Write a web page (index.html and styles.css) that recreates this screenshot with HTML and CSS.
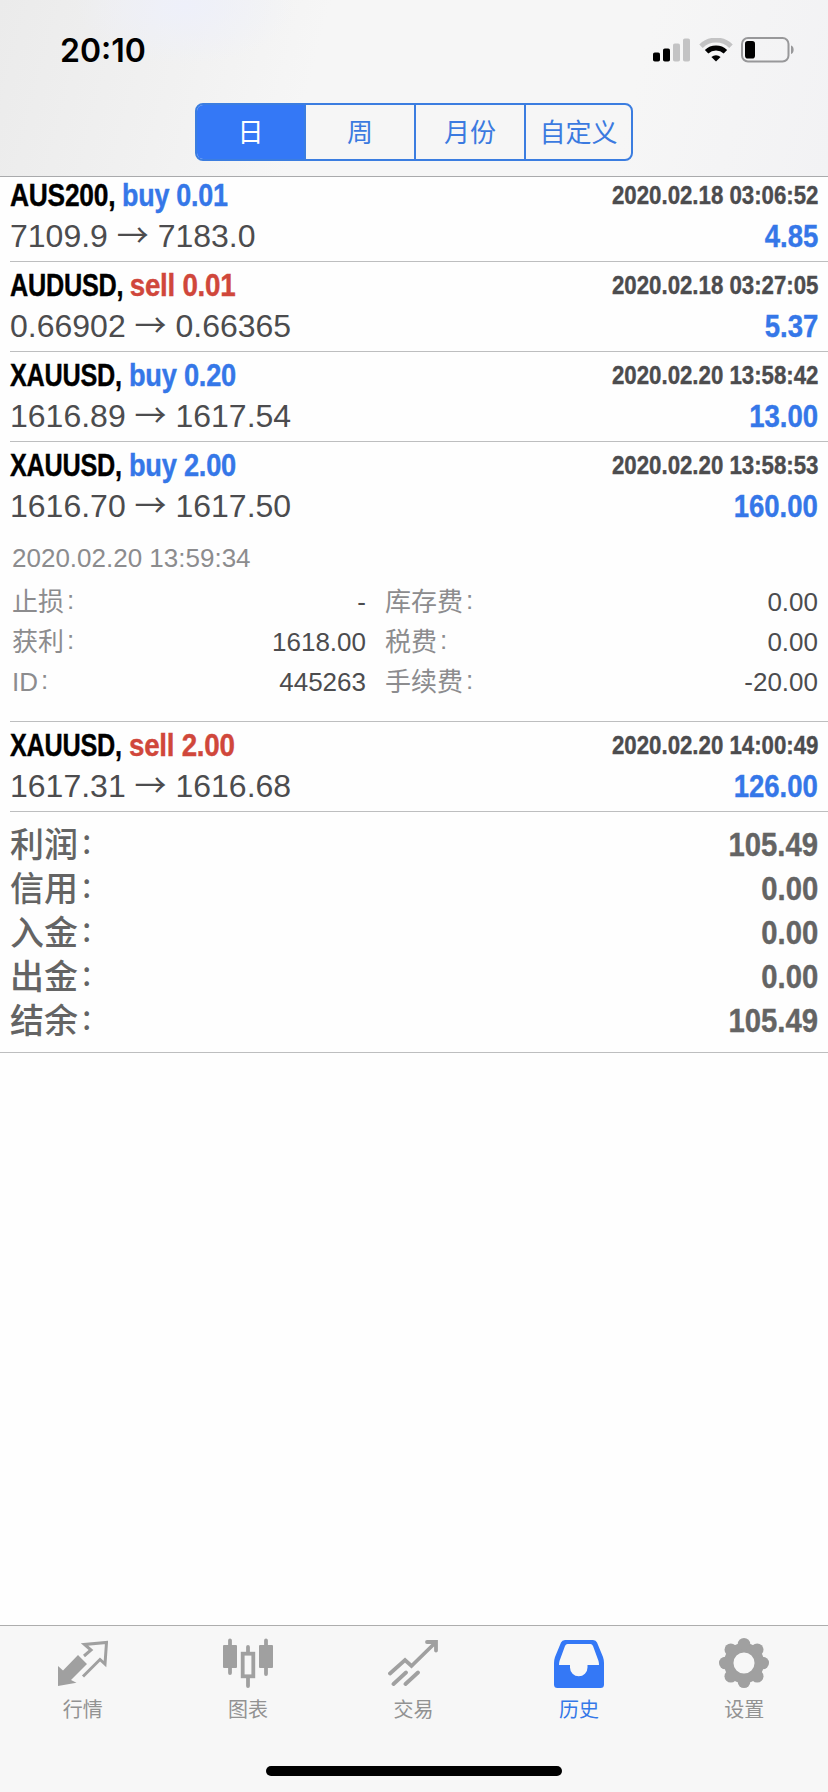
FILE: index.html
```
<!DOCTYPE html>
<html lang="zh-CN">
<head>
    <meta charset="UTF-8">
    <meta name="viewport" content="width=device-width, initial-scale=1.0">
    <title>历史</title>
    <link rel="stylesheet" href="styles.css">
</head>
<body>
    <div class="app">
        <header class="header">
            <div class="status-bar">
                <span class="clock">20:10</span>
                <div class="status-icons">
                    <svg class="signal" width="37" height="24" viewBox="0 0 37 24">
                        <rect x="0" y="14.5" width="7" height="9" rx="1.8"/>
                        <rect x="10" y="10.5" width="7" height="13" rx="1.8"/>
                        <rect class="dim" x="20" y="5.5" width="7" height="18" rx="1.8"/>
                        <rect class="dim" x="30" y="0.5" width="7" height="23" rx="1.8"/>
                    </svg>
                    <svg class="wifi" width="34" height="24" viewBox="0 0 34 24">
                        <path class="wifi-dim" d="M2 8.2 A21.5 21.5 0 0 1 32 8.2"/>
                        <path class="wifi-on" d="M7.6 13.7 A13.6 13.6 0 0 1 26.4 13.7"/>
                        <path d="M17 23.5 L12.4 19 A7 7 0 0 1 21.6 19 Z"/>
                    </svg>
                    <svg class="battery" width="54" height="26" viewBox="0 0 54 26">
                        <rect class="battery-frame" x="1" y="1" width="46.5" height="23.5" rx="6"/>
                        <rect x="4" y="4" width="10" height="17.5" rx="2.8"/>
                        <path class="battery-nub" d="M50 8.5 C53.5 9.5 53.5 16 50 17 Z"/>
                    </svg>
                </div>
            </div>
            <div class="segments">
                <div class="segment active">日</div>
                <div class="segment">周</div>
                <div class="segment">月份</div>
                <div class="segment">自定义</div>
            </div>
        </header>

        <main class="history">
            <div class="deal first">
                <div class="line"><span class="symbol wide">AUS200, <span class="buy">buy 0.01</span></span><span class="time">2020.02.18 03:06:52</span></div>
                <div class="line"><span class="price">7109.9 <span class="arrow">→</span> 7183.0</span><span class="profit">4.85</span></div>
            </div>
            <div class="deal">
                <div class="line"><span class="symbol">AUDUSD, <span class="sell">sell 0.01</span></span><span class="time">2020.02.18 03:27:05</span></div>
                <div class="line"><span class="price">0.66902 <span class="arrow">→</span> 0.66365</span><span class="profit">5.37</span></div>
            </div>
            <div class="deal">
                <div class="line"><span class="symbol">XAUUSD, <span class="buy">buy 0.20</span></span><span class="time">2020.02.20 13:58:42</span></div>
                <div class="line"><span class="price">1616.89 <span class="arrow">→</span> 1617.54</span><span class="profit">13.00</span></div>
            </div>
            <div class="deal">
                <div class="line"><span class="symbol">XAUUSD, <span class="buy">buy 2.00</span></span><span class="time">2020.02.20 13:58:53</span></div>
                <div class="line"><span class="price">1616.70 <span class="arrow">→</span> 1617.50</span><span class="profit">160.00</span></div>
                <div class="details">
                    <div class="close-time">2020.02.20 13:59:34</div>
                    <div class="detail"><span>止损<i>:</i></span><b>-</b></div>
                    <div class="detail"><span>库存费<i>:</i></span><b>0.00</b></div>
                    <div class="detail"><span>获利<i>:</i></span><b>1618.00</b></div>
                    <div class="detail"><span>税费<i>:</i></span><b>0.00</b></div>
                    <div class="detail"><span>ID<i>:</i></span><b>445263</b></div>
                    <div class="detail"><span>手续费<i>:</i></span><b>-20.00</b></div>
                </div>
            </div>
            <div class="deal">
                <div class="line"><span class="symbol">XAUUSD, <span class="sell">sell 2.00</span></span><span class="time">2020.02.20 14:00:49</span></div>
                <div class="line"><span class="price">1617.31 <span class="arrow">→</span> 1616.68</span><span class="profit">126.00</span></div>
            </div>
            <div class="totals">
                <div class="total"><span class="total-label">利润<i>:</i></span><span class="total-value">105.49</span></div>
                <div class="total"><span class="total-label">信用<i>:</i></span><span class="total-value">0.00</span></div>
                <div class="total"><span class="total-label">入金<i>:</i></span><span class="total-value">0.00</span></div>
                <div class="total"><span class="total-label">出金<i>:</i></span><span class="total-value">0.00</span></div>
                <div class="total"><span class="total-label">结余<i>:</i></span><span class="total-value">105.49</span></div>
            </div>
        </main>

        <footer class="footer">
            <nav class="tabs">
                <div class="tab">
                    <svg width="50" height="50" viewBox="0 0 50 50">
                        <path d="M0 28 L5 32.5 L20 17 L29 26 L13 42 L18.5 44.7 L0 48 Z"/>
                        <path class="thin" d="M26 18 L33 12 L26.5 6.5 L48.5 4.5 L47 26 L42 21.5 L25 38.5"/>
                    </svg>
                    <span>行情</span>
                </div>
                <div class="tab">
                    <svg width="50" height="50" viewBox="0 0 50 50">
                        <rect x="0" y="7" width="14" height="23" rx="1"/>
                        <rect x="36" y="7" width="14" height="23" rx="1"/>
                        <path class="stroke" d="M7 2.5 V35 M43 2.5 V36 M25 9 V15 M25 40 V48"/>
                        <rect class="stroke" x="19.7" y="15.7" width="10.6" height="22.6"/>
                    </svg>
                    <span>图表</span>
                </div>
                <div class="tab">
                    <svg width="50" height="50" viewBox="0 0 50 50">
                        <path class="stroke" d="M2 35.5 L17 22 L23.5 28 L47.5 4.5 M39 4 H48 V12.5 M5.5 46 L18 34.5 M17.5 46 L30 34.5"/>
                    </svg>
                    <span>交易</span>
                </div>
                <div class="tab active">
                    <svg width="50" height="50" viewBox="0 0 50 50">
                        <path fill-rule="evenodd" d="M11 2 H39 Q42 2 43 4.5 L49 19 Q50 22 50 25 V46.5 Q50 50 46.5 50 H3.5 Q0 50 0 46.5 V25 Q0 22 1 19 L7 4.5 Q8 2 11 2 Z M13.5 6 Q11.8 6 11 8 L5.5 23 Q5 25 5 27 H16 V29.5 A8.7 8.7 0 0 0 33.5 29.5 V27 H45 Q45 25 44.5 23 L39 8 Q38.2 6 36.5 6 Z"/>
                    </svg>
                    <span>历史</span>
                </div>
                <div class="tab">
                    <svg width="50" height="50" viewBox="0 0 50 50">
                        <circle class="gear-ring" cx="25" cy="25" r="15.3"/>
                        <circle cx="25" cy="6.3" r="6.3"/>
                        <circle cx="38.2" cy="11.8" r="6.3"/>
                        <circle cx="43.7" cy="25" r="6.3"/>
                        <circle cx="38.2" cy="38.2" r="6.3"/>
                        <circle cx="25" cy="43.7" r="6.3"/>
                        <circle cx="11.8" cy="38.2" r="6.3"/>
                        <circle cx="6.3" cy="25" r="6.3"/>
                        <circle cx="11.8" cy="11.8" r="6.3"/>
                    </svg>
                    <span>设置</span>
                </div>
            </nav>
            <div class="home-indicator"></div>
        </footer>
    </div>
</body>
</html>
```
FILE: styles.css
```
* { box-sizing: border-box; }
body {
    margin: 0;
    background: #fefefe;
    font-family: "Liberation Sans", "Noto Sans CJK SC", sans-serif;
    color: #4c4c4e;
}
i, b { font-style: normal; font-weight: normal; }
.app {
    width: 828px;
    height: 1792px;
    display: flex;
    flex-direction: column;
    overflow: hidden;
}

/* header */
.header {
    height: 177px;
    flex: none;
    border-bottom: 1px solid #a9aaac;
    background:
        radial-gradient(ellipse 110px 60px at 185px 5px, #eef0fa, rgba(238,240,250,0)),
        linear-gradient(105deg, #ebebeb 0%, #f1f1f1 22%, #f6f6f6 38%, #f6f6f6 75%, #f2f2f4 100%);
}
.status-bar {
    height: 103px;
    padding: 0 33px 3px 60px;
    display: flex;
    align-items: center;
    justify-content: space-between;
}
.clock {
    font-family: Inter, sans-serif;
    font-size: 32px;
    font-weight: 600;
    color: #000;
}
.status-icons { display: flex; align-items: center; }
.signal { margin-right: 8.5px; }
.wifi { margin-right: 8.5px; }
.dim { fill: #c3c3c4; }
.wifi-dim { fill: none; stroke: #c3c3c4; stroke-width: 5; }
.wifi-on { fill: none; stroke: #000; stroke-width: 5; }
.battery-frame { fill: none; stroke: #98989a; stroke-width: 2; }
.battery-nub { fill: #98989a; }
.segments {
    width: 438px;
    height: 58px;
    margin-left: 195px;
    display: grid;
    grid-template-columns: 107px 110px 110px 107px;
    border: 2px solid #3b7de0;
    border-radius: 8px;
    overflow: hidden;
}
.segment {
    display: flex;
    align-items: center;
    justify-content: center;
    border-left: 2px solid #3b7de0;
    font-family: "Noto Sans CJK SC", sans-serif;
    font-size: 26px;
    line-height: 52px;
    padding-bottom: 2px;
    color: #3b7ae0;
}
.segment:first-child { border-left: none; }
.segment.active { background: #3478f6; color: #fff; }

/* deals */
.history { flex: 1; }
.deal {
    margin-left: 10px;
    padding: 2px 10px 5px 0;
    border-bottom: 1px solid #bdbebf;
}
.deal.first { padding-top: 0; margin-top: -3px; }
.line {
    height: 41px;
    display: flex;
    align-items: center;
    justify-content: space-between;
    line-height: 41px;
    white-space: pre;
}

/* condensed bold figures */
.symbol, .time, .profit, .total-value {
    font-weight: bold;
    -webkit-text-stroke: 0.4px currentColor;
}
.symbol {
    font-size: 32px;
    color: #000;
    letter-spacing: -0.3px;
    transform: translateY(1px) scaleX(0.788);
    transform-origin: left center;
}
.symbol.wide { transform: translateY(1px) scaleX(0.824); }
.time {
    font-size: 26px;
    transform: translateY(1px) scaleX(0.855);
    transform-origin: right center;
}
.profit {
    font-size: 32px;
    color: #3577e8;
    transform: translateY(1px) scaleX(0.86);
    transform-origin: right center;
}
.buy, .sell {
    display: inline-block;
    color: #3577e8;
    transform: scaleX(1.08);
    transform-origin: left center;
}
.wide .buy { transform: scaleX(1.02); }
.sell { color: #d0473b; transform: scaleX(1.1); }
.price { font-size: 32px; transform: translateY(-1px); }
.arrow { font-family: "Noto Sans CJK SC", sans-serif; font-weight: 400; }

.details {
    height: 190px;
    padding: 12px 0 0 2px;
    display: grid;
    grid-template-columns: 354px 433px;
    column-gap: 19px;
    grid-template-rows: 44px;
    grid-auto-rows: 40px;
    font-size: 26px;
}
.close-time { grid-column: 1 / -1; line-height: 40px; color: #8c8c8e; }
.detail {
    display: flex;
    justify-content: space-between;
    align-items: center;
    line-height: 40px;
}
.detail span { color: #8c8c8e; }
.detail i { margin-left: 3px; vertical-align: 2px; line-height: 1; }

/* totals */
.totals {
    height: 241px;
    padding: 9px 10px 0;
    border-bottom: 1px solid #bdbebf;
    color: #646464;
}
.total {
    height: 44px;
    display: flex;
    justify-content: space-between;
    align-items: center;
    line-height: 44px;
    font-size: 34px;
}
.total-label { font-family: "Noto Sans CJK SC", sans-serif; font-weight: 500; }
.total-label i { margin-left: 4px; vertical-align: 3px; line-height: 1; }
.total-value {
    transform: translateY(1px) scaleX(0.86);
    transform-origin: right center;
}

/* tab bar */
.footer {
    height: 167px;
    flex: none;
    border-top: 1px solid #adadad;
    background: #f7f7f7;
}
.tabs {
    height: 140px;
    padding: 12px 1px 0 0;
    display: grid;
    grid-template-columns: repeat(5, 1fr);
}
.tab {
    display: flex;
    flex-direction: column;
    align-items: center;
    font-family: "Noto Sans CJK SC", sans-serif;
    font-size: 20px;
    line-height: 24px;
    color: #929292;
    fill: #a0a0a0;
    stroke: none;
}
.tab span { margin-top: 9px; }
.tab.active { color: #3478e8; fill: #3478f6; }
.stroke { fill: none; stroke: #a0a0a0; stroke-width: 3.8; stroke-linecap: round; }
.thin { fill: none; stroke: #a0a0a0; stroke-width: 3; }
.gear-ring { fill: none; stroke: #a0a0a0; stroke-width: 9.5; }
.home-indicator {
    width: 296px;
    height: 10px;
    margin: 0 auto;
    border-radius: 5px;
    background: #000;
}
```
